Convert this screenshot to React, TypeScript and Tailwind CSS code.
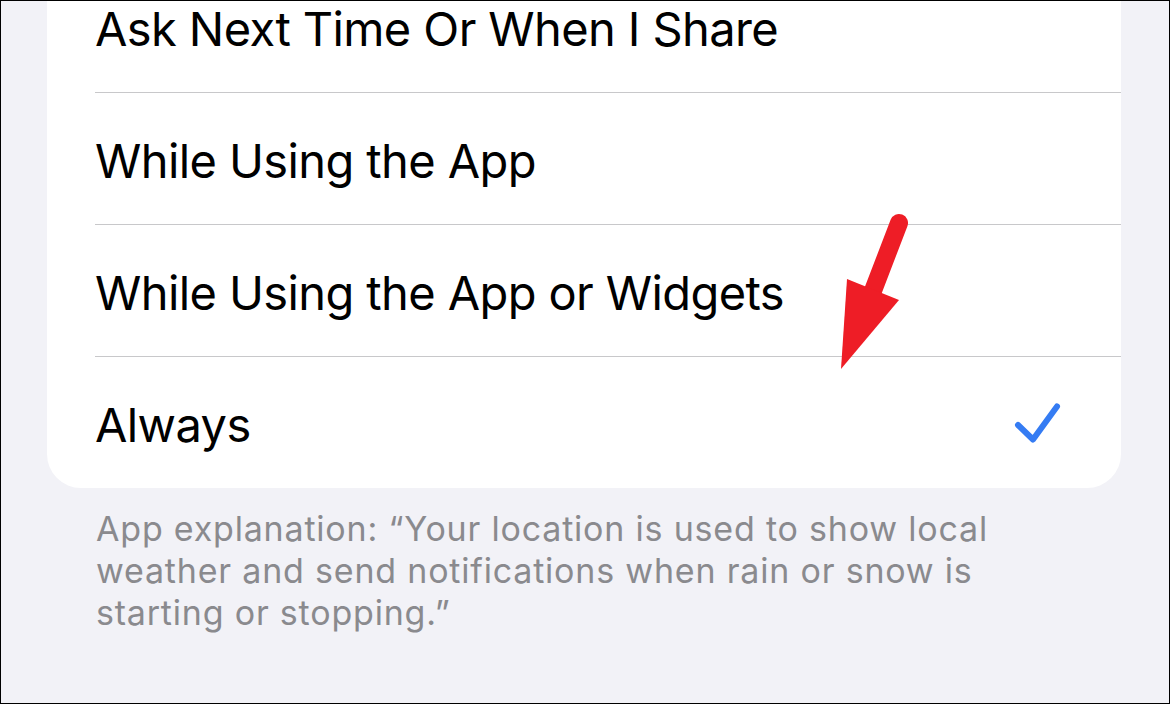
import { Fragment } from "react";

const OPTIONS = [
  { id: 1, label: "Ask Next Time Or When I Share", selected: false },
  { id: 2, label: "While Using the App", selected: false },
  { id: 3, label: "While Using the App or Widgets", selected: false },
  { id: 4, label: "Always", selected: true },
];

function Checkmark() {
  return (
    <svg width="48" height="42" viewBox="0 0 48 42" fill="none">
      <path
        d="M4 23 L19 37.5 L43 4.5"
        stroke="#357cf3"
        strokeWidth="6"
        strokeLinecap="round"
        strokeLinejoin="round"
      />
    </svg>
  );
}

function RedArrow() {
  return (
    <svg
      className="absolute left-[830px] top-[205px] pointer-events-none"
      width="90"
      height="170"
      viewBox="0 0 90 170"
    >
      <line x1="68" y1="17" x2="40" y2="90" stroke="#ee1d26" strokeWidth="18" strokeLinecap="round" />
      <polygon points="16,73 68,94 10,163" fill="#ee1d26" />
    </svg>
  );
}

export default function App() {
  return (
    <div
      className="relative h-[704px] w-full overflow-hidden border border-black bg-[#f2f2f7]"
      style={{ fontFamily: 'Inter, "Noto Sans", "Liberation Sans", sans-serif' }}
    >
      <div className="ml-[46px] mr-[48px] -mt-[40px] rounded-b-[34px] bg-white">
        {OPTIONS.map((opt, i) => (
          <Fragment key={opt.id}>
            {i > 0 && <div className="ml-[48px] h-px bg-[#c8c8ca]" />}
            <div className="flex h-[131px] items-center justify-between pl-[48px] pr-[59px]">
              <span className="pt-[3px] text-[47px] leading-none tracking-[-0.6px] text-black">{opt.label}</span>
              {opt.selected && <Checkmark />}
            </div>
          </Fragment>
        ))}
      </div>

      <p className="mt-[20px] ml-[95px] w-[980px] text-[34px] leading-[42px] tracking-[0.8px] text-[#8a8a8e]">
        App explanation: “Your location is used to show local weather and send notifications when rain or snow is
        starting or stopping.”
      </p>

      <RedArrow />
    </div>
  );
}
